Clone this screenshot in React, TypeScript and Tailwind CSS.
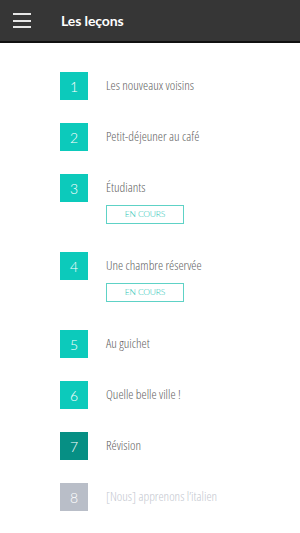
import React from 'react';

type Lesson = {
    num: number;
    title: string;
    status: 'done' | 'current' | 'review' | 'locked';
};

const lessons: Lesson[] = [
    { num: 1, title: 'Les nouveaux voisins', status: 'done' },
    { num: 2, title: 'Petit-déjeuner au café', status: 'done' },
    { num: 3, title: 'Étudiants', status: 'current' },
    { num: 4, title: 'Une chambre réservée', status: 'current' },
    { num: 5, title: 'Au guichet', status: 'done' },
    { num: 6, title: 'Quelle belle ville !', status: 'done' },
    { num: 7, title: 'Révision', status: 'review' },
    { num: 8, title: '[Nous] apprenons l’italien', status: 'locked' },
];

const boxColor = (status: Lesson['status']) => {
    if (status === 'review') return 'bg-[#068f84]';
    if (status === 'locked') return 'bg-[#b9bec8]';
    return 'bg-[#0ccabb]';
};

const App: React.FC = () => {
    return (
        <div className="min-h-[533px] w-[300px] bg-white" style={{ fontFamily: 'Lato, "Open Sans", sans-serif' }}>
            {/* Header */}
            <div className="flex h-[43px] items-center border-b-2 border-[#111111] bg-[#363636]">
                <div className="ml-[13px] flex w-[18px] flex-col gap-[4.5px]">
                    <span className="block h-[2px] bg-[#e6e6e6]" />
                    <span className="block h-[2px] bg-[#e6e6e6]" />
                    <span className="block h-[2px] bg-[#e6e6e6]" />
                </div>
                <h1 className="ml-[30px] text-[14px] font-bold tracking-[-0.1px] text-white">
                    Les leçons
                </h1>
            </div>

            {/* Lesson list */}
            <ul className="pl-[60px] pt-[29px]">
                {lessons.map(lesson => (
                    <li key={lesson.num} className="mb-[23px] flex">
                        <div
                            className={`flex h-[28px] w-[28px] shrink-0 items-center justify-center text-[14px] font-light text-white ${boxColor(lesson.status)}`}
                        >
                            {lesson.num}
                        </div>
                        <div className="ml-[18px] flex flex-col">
                            <span
                                className={`flex h-[28px] items-center text-[13px] font-light font-stretch-[82%] ${
                                    lesson.status === 'locked' ? 'text-[#c3c7cf]' : 'text-[#626262]'
                                }`}
                                style={{ fontFamily: '"Open Sans", sans-serif' }}
                            >
                                {lesson.title}
                            </span>
                            {lesson.status === 'current' && (
                                <span className="mb-[5px] mt-[3px] flex h-[19px] w-[78px] items-center justify-center border border-[#5ed2c6] text-[8.5px] font-light tracking-[-0.2px] text-[#20c2b2]">
                                    EN COURS
                                </span>
                            )}
                        </div>
                    </li>
                ))}
            </ul>
        </div>
    );
};

export default App;
